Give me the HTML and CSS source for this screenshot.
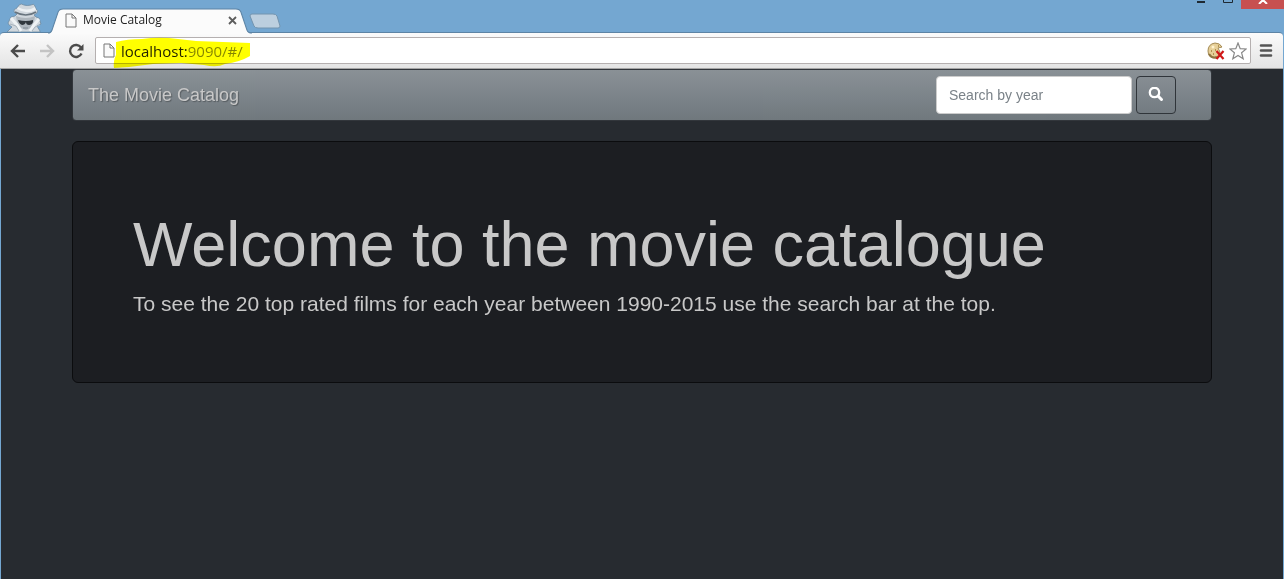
FILE: index.html
```html
<!DOCTYPE html>
<html lang="en">
<head>
<meta charset="utf-8">
<title>Movie Catalog</title>
<link rel="stylesheet" href="styles.css">
</head>
<body>
<div class="window">
  <div class="titlebar">
    <svg class="incognito" width="42" height="32" viewBox="0 0 42 32" aria-hidden="true">
      <path d="M3 32L8 27 5 25 4 23 7 17 11 16 13 14 10 12Q9 9 13 8L15 5Q17 3 20 5 23 6 27 5 30 3 31 6L32 9Q35 10 33 13L30 15 32 17 35 18 37 24 33 26 36 31V32Z" fill="#d0d7dd" stroke="#6c8aa2" stroke-width=".8"/>
      <path d="M13 9Q22 15 32 10L31 7Q23 12 14 7Z" fill="#edf1f4"/>
      <path d="M11 12Q22 18 32 12" fill="none" stroke="#67737d" stroke-width="1.600"/>
      <path d="M12 16Q22 20 31 16L30 22 27 28 22 30 17 28 13 22Z" fill="#aeb6bd"/>
      <path d="M7 18L13 25 17 31M35 19L30 25 26 31" fill="none" stroke="#eef2f4" stroke-width="3"/>
      <path d="M6 24L12 26 15 31M36 25L31 27 28 31" fill="none" stroke="#a9b4bd"/>
      <path d="M14 20Q22 22 29 20V22Q28 25 25 25 22 25 22 22 21 25 18 25 15 24 14 20Z" fill="#30373d"/>
      <path d="M19 28H24" stroke="#7f8a93"/>
    </svg>
    <div class="tab">
      <svg class="tab-shape" viewBox="0 0 202 26" preserveAspectRatio="none" aria-hidden="true">
        <path d="M0 26Q3 25 4 22L10 4Q11 1 15 1H186Q190 1 191 4L197 22Q198 25 202 26Z" fill="#fbfbfb"/>
        <path d="M0 25Q3 25 4 22L10 4Q11 1 15 1H186Q190 1 191 4L197 22Q198 25 202 25" fill="none" stroke="#5d84a5"/>
      </svg>
      <svg class="page-icon" width="12" height="15" viewBox="0 0 12 15" aria-hidden="true"><path d="M1 1H7L11 5V14H1ZM7 1V5H11" fill="#fafafa" stroke="#777"/></svg>
      <span class="tab-title">Movie Catalog</span>
      <button class="tab-close" aria-label="Close tab"><svg width="9" height="9" viewBox="0 0 9 9"><path d="M1 1L8 8M8 1L1 8" stroke="#5d5d5d" stroke-width="1.800"/></svg></button>
    </div>
    <button class="new-tab" aria-label="New tab"><svg width="32" height="16" viewBox="0 0 32 16"><path d="M3 1H24Q27 1 28 3L31 13Q31 15 29 15H9Q6 15 5 13L1 3Q1 1 3 1Z" fill="#bccfdf" stroke="#7394af"/></svg></button>
    <div class="controls">
      <button class="minimise" aria-label="Minimise"><svg width="8" height="3"><path d="M0 2H8" stroke="#1e2932" stroke-width="2"/></svg></button>
      <button class="maximise" aria-label="Maximise"><svg width="10" height="3"><path d="M.5 0V2.500H9.500V0" fill="none" stroke="#1e2932"/></svg></button>
      <button class="close" aria-label="Close"><svg width="10" height="4" viewBox="0 0 10 4"><path d="M1 4L5 0 9 4" fill="none" stroke="#fff" stroke-width="2"/></svg></button>
    </div>
  </div>

  <div class="toolbar">
    <button class="nav-button" aria-label="Back"><svg width="16" height="14" viewBox="0 0 16 14"><path d="M15 7H2M8 1L2 7 8 13" fill="none" stroke="#4b4b4b" stroke-width="2.400"/></svg></button>
    <button class="nav-button" aria-label="Forward" disabled><svg width="16" height="14" viewBox="0 0 16 14"><path d="M1 7H14M8 1L14 7 8 13" fill="none" stroke="#c3c3c3" stroke-width="2.400"/></svg></button>
    <button class="nav-button" aria-label="Reload"><svg width="16" height="16" viewBox="0 0 16 16"><path d="M13 4.500A6 6 0 1 0 13.500 10.500" fill="none" stroke="#4b4b4b" stroke-width="2.400"/><path d="M15.500 1V7.500H9Z" fill="#4b4b4b"/></svg></button>
    <div class="omnibox">
      <svg class="page-icon" width="12" height="15" viewBox="0 0 12 15" aria-hidden="true"><path d="M1 1H7L11 5V14H1ZM7 1V5H11" fill="#fafafa" stroke="#777"/></svg>
      <input class="address" type="text" value="localhost:9090/#/" aria-label="Address">
      <svg class="marker" width="138" height="32" viewBox="0 0 138 32" aria-hidden="true"><path d="M3 5Q14 2 29 2Q42 0 56 1L83 4 137 6V19Q127 25 112 27Q104 31 91 28L68 26 40 27 16 30 1 31Q0 24 3 18Z" fill="#ff0"/></svg>
      <button class="omni-button" aria-label="Cookies blocked"><svg width="18" height="18" viewBox="0 0 18 18"><path d="M8 1Q13 1 15 5L11 6 13 10 10 16Q1 17 1 9Q1 2 8 1Z" fill="#e6cf98" stroke="#a58b54"/><path d="M2 12Q5 17 10 15" fill="none" stroke="#8d7440" stroke-width="2"/><circle cx="6" cy="5" r="1.500" fill="#fff2cd"/><path d="M4 9H5M8 8H9M6 12H7M11 4H12" stroke="#a17d39" stroke-width="1.500"/><path d="M9.500 9L16.500 17M16.500 9L9.500 17" stroke="#cf1717" stroke-width="2.200"/></svg></button>
      <button class="omni-button" aria-label="Bookmark"><svg width="18" height="18" viewBox="0 0 18 18"><path d="M9 1L11.200 6.600 17.200 7 12.600 10.800 14.200 16.800 9 13.500 3.800 16.800 5.400 10.800 .8 7 6.800 6.600Z" fill="#fff" stroke="#888" stroke-width="1.200"/></svg></button>
    </div>
    <button class="menu" aria-label="Menu"><svg width="14" height="13" viewBox="0 0 14 13"><path d="M2 1.500H12M2 6.500H12M2 11.500H12" stroke="#555" stroke-width="2.600" stroke-linecap="round"/></svg></button>
  </div>

  <div class="page">
    <div class="container">
      <nav class="navbar">
        <a class="brand" href="#/">The Movie Catalog</a>
        <form class="search">
          <input class="search-input" type="text" placeholder="Search by year" aria-label="Search by year">
          <button class="search-button" type="button" aria-label="Search"><svg width="16" height="16" viewBox="0 0 16 16"><circle cx="6.500" cy="5.500" r="4.700" fill="none" stroke="#fff" stroke-width="2.300"/><path d="M10 9L13.500 12.500" stroke="#fff" stroke-width="3" stroke-linecap="round"/></svg></button>
        </form>
      </nav>
      <main class="jumbotron">
        <h1>Welcome to the movie catalogue</h1>
        <p>To see the 20 top rated films for each year between 1990-2015 use the search bar at the top.</p>
      </main>
    </div>
  </div>
</div>
</body>
</html>
```
FILE: styles.css
```css
* { box-sizing: border-box; }
body { margin: 0; font-family: "Liberation Sans", Arial, sans-serif; }
button { margin: 0; padding: 0; border: 0; background: none; }
svg { display: block; }

.window { display: flex; flex-direction: column; min-height: 100vh; background: #74a7d1; }

/* Browser frame */
.titlebar { display: flex; align-items: flex-end; height: 32px; padding-left: 4px; }
.incognito { flex: none; }
.tab {
  position: relative;
  display: flex;
  align-items: center;
  width: 204px;
  height: 24px;
  padding: 0 15px 0 17px;
  margin-left: 2px;
  font: 12px/16px "Open Sans", sans-serif;
  color: #222;
}
.tab-shape { position: absolute; top: 0; left: 0; width: 100%; height: 26px; }
.page-icon { position: relative; flex: none; }
.tab-title { position: relative; flex: 1; margin-left: 6px; white-space: nowrap; }
.tab-close { position: relative; }
.new-tab { align-self: flex-end; margin-bottom: 3px; margin-left: -3px; }
.controls { display: flex; align-self: flex-start; margin-left: auto; }
.controls button { display: flex; justify-content: center; width: 27px; height: 9px; }
.controls .close { width: 43px; background: #c75050; }

.toolbar {
  display: flex;
  align-items: center;
  height: 37px;
  margin-right: 1px;
  padding: 0 10px 0 10px;
  border-top: 1px solid #5d84a5;
  border-bottom: 1px solid #a5a5a5;
  border-radius: 4px 4px 0 0;
  background: linear-gradient(#fbfbfb, #e4e4e4);
}
.nav-button { width: 16px; margin-right: 13px; }
.nav-button:nth-child(3) { margin-right: 11px; }
.omnibox {
  position: relative;
  display: flex;
  flex: 1;
  align-items: center;
  height: 27px;
  padding: 0 3px 0 7px;
  border: 1px solid #b5b0b0;
  border-radius: 2px;
  background: #fff;
}
.address {
  flex: 1;
  min-width: 0;
  height: 24px;
  margin-left: 6px;
  padding: 0;
  border: 0;
  outline: 0;
  font: 15px/24px "Open Sans", sans-serif;
  color: transparent;
  background: linear-gradient(to right, #222 67px, #858585 67px);
  -webkit-background-clip: text;
  background-clip: text;
}
.marker { position: absolute; left: 17px; top: -1px; mix-blend-mode: multiply; pointer-events: none; }
.omni-button { margin-left: 4px; }
.menu { margin-left: 8px; }

/* Page */
.page { flex: 1; margin: 0 1px; background: #272b30; color: #c8c8c8; }
.container { max-width: 1140px; margin: 0 auto; }
.navbar {
  display: flex;
  align-items: center;
  justify-content: space-between;
  height: 52px;
  padding: 0 35px 0 15px;
  border: 1px solid #32363b;
  border-radius: 4px;
  background: linear-gradient(#8a9196, #7a8288 60%, #70787d);
}
.brand { font-size: 18px; line-height: 20px; color: #c8c8c8; text-decoration: none; text-shadow: 1px 1px 1px rgba(0, 0, 0, .3); }
.search { display: flex; gap: 4px; }
.search-input {
  width: 196px;
  height: 38px;
  padding: 8px 12px;
  border: 1px solid #ccc;
  border-radius: 4px;
  font: 14px/20px "Liberation Sans", Arial, sans-serif;
  background: #fff;
}
.search-input::placeholder { color: #7a8288; }
.search-button {
  display: flex;
  align-items: center;
  justify-content: center;
  width: 40px;
  height: 38px;
  border: 1px solid #30353a;
  border-radius: 4px;
}
.jumbotron {
  margin-top: 20px;
  padding: 48px 60px;
  border: 1px solid #0b0c0e;
  border-radius: 6px;
  background: #1c1e22;
}
h1 { margin: 20px 0 10px; font-size: 63px; line-height: 69px; font-weight: 500; }
.jumbotron p { margin: 0 0 15px; font-size: 21px; line-height: 30px; }
```
